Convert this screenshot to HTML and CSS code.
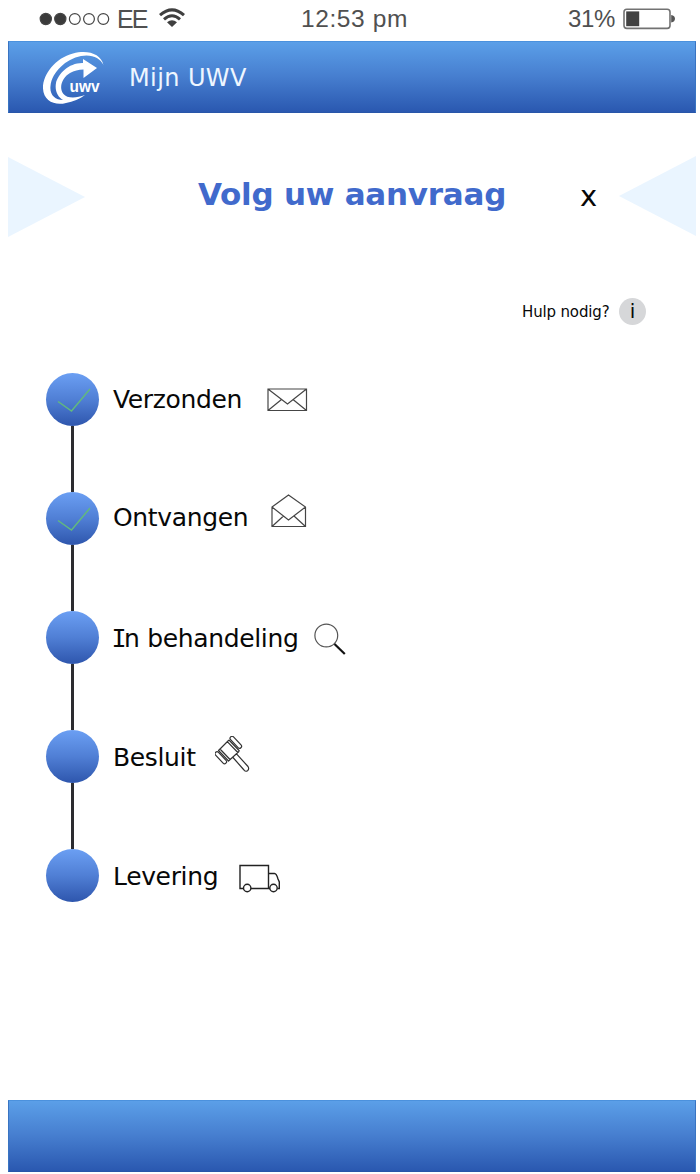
FILE: index.html
```html
<!DOCTYPE html>
<html lang="nl">
<head>
<meta charset="utf-8">
<title>Mijn UWV</title>
<link rel="stylesheet" href="styles.css">
</head>
<body>
<div class="screen">
  <div class="status">
    <svg class="signal" width="72" height="16" viewBox="0 0 72 16"><g stroke="#454545" stroke-width="1.2"><circle cx="6.8" cy="8" r="5.6" fill="#3b3b3b"/><circle cx="21.3" cy="8" r="5.6" fill="#3b3b3b"/><g fill="none"><circle cx="35.8" cy="8" r="5.4"/><circle cx="50" cy="8" r="5.4"/><circle cx="64.3" cy="8" r="5.4"/></g></g></svg>
    <span class="carrier">EE</span>
    <svg class="wifi" width="28" height="20" viewBox="0 0 28 20"><g fill="none" stroke="#3f3f3f" stroke-width="3"><path d="M2 7.2Q14-3.4 26 7.2"/><path d="M6 11.3Q14 4.2 22 11.3"/></g><path d="M9 14.3Q14 10.3 19 14.3L14 19z" fill="#3f3f3f"/></svg>
    <span class="clock">12:53 pm</span>
    <span class="percent">31%</span>
    <svg class="battery" width="53" height="22" viewBox="0 0 53 22"><rect x="1" y="1.2" width="46" height="19.2" rx="2.8" fill="#fff" stroke="#727272" stroke-width="1.6"/><rect x="3.2" y="3.4" width="13" height="14.8" fill="#424242"/><path d="M48.2 7Q52 7.8 52 10.8T48.2 14.6z" fill="#555"/></svg>
  </div>
  <header class="bar">
    <svg class="logo" width="64" height="56" viewBox="0 0 64 56"><path d="M61.5 15C59 4 46-.5 31 3.500C13 8 .5 25 1 38.500C1.500 51 13 56 24 53C31 51.500 38 49 43 45C34 48.500 25 48.500 21.500 44C16 37 21 27 28 23Q34 19.500 41.500 19.500L41.500 28L55 18L41 9V13C27 12.500 16 24 14 33C12.500 41 16 47 21 50C13 50 7.500 45 8.500 36C10 22 24 9 39 6C50 4 58 8 61.500 15Z" fill="#fff"/><text class="logo-text" x="27.500" y="42" textLength="30" lengthAdjust="spacingAndGlyphs">uwv</text></svg>
    <span class="brand">Mijn UWV</span>
  </header>
  <main>
    <div class="title-row">
      <svg width="78" height="82" viewBox="0 0 78 82"><path d="M0 1 77 41 0 81z" fill="#eaf5ff"/></svg>
      <h1 class="title">Volg uw aanvraag</h1>
      <span class="close">x</span>
      <svg class="prev" width="77" height="80" viewBox="0 0 77 80"><path d="M77 0 0 40 77 80z" fill="#eaf5ff"/></svg>
    </div>
    <div class="help"><span class="help-label">Hulp nodig?</span><span class="info">i</span></div>
    <ol class="steps">
      <li class="step">
        <div class="track"><span class="dot"><svg width="53" height="53"><path d="M12 28.500 25.500 38 44 16" fill="none" stroke="#62b97e" stroke-width="1.500"/></svg></span></div>
        <span class="label sent">Verzonden</span>
        <svg class="icon mail" width="41" height="24" viewBox="0 0 41 24"><g fill="none" stroke="#454545" stroke-width="1.200"><path d="M1 1H39.500V22.500H1zM1 1 20.500 16 39.500 1M1 22.500 14.500 11.500M39.500 22.500 26 11.500"/></g></svg>
      </li>
      <li class="step">
        <div class="track"><span class="dot"><svg width="53" height="53"><path d="M12 28.500 25.500 38 44 16" fill="none" stroke="#62b97e" stroke-width="1.500"/></svg></span></div>
        <span class="label received">Ontvangen</span>
        <svg class="icon open" width="36" height="34" viewBox="0 0 36 34"><g fill="none" stroke="#454545" stroke-width="1.200"><path d="M1 13 17.500 1 34.500 13V32.500H1zM1 13 17.500 26 34.500 13M1 32.500 12.500 22M34.500 32.500 23 22"/></g></svg>
      </li>
      <li class="step">
        <div class="track"><span class="dot"></span></div>
        <span class="label progress"><span class="serif-i">I</span>n behandeling</span>
        <svg class="icon search" width="33" height="33" viewBox="0 0 33 33"><circle cx="12.300" cy="12.500" r="11.400" fill="none" stroke="#555" stroke-width="1.200"/><path d="M20.500 21 30.800 31" stroke="#111" stroke-width="2.200"/></svg>
      </li>
      <li class="step">
        <div class="track"><span class="dot"></span></div>
        <span class="label decision">Besluit</span>
        <svg class="icon gavel" width="35" height="37" viewBox="0 0 35 37"><g fill="none" stroke="#333" stroke-width="1.200" stroke-linejoin="round"><rect x="13.300" y="4.300" width="15" height="4" rx="2" transform="rotate(47 20.800 6.300)"/><rect x="-1.700" y="19.700" width="15" height="4" rx="2" transform="rotate(47 5.800 21.700)"/><path d="M14 4 24.500 15M14 4 3.500 14.500 13.500 25 24.500 15M12.300 5.700 22.800 16.500M5 13 15 23.500M21.500 17.800 33 30.500Q34.500 33 32.500 34.800 30.500 36 29 34L18 21.500"/></g></svg>
      </li>
      <li class="step">
        <div class="track"><span class="dot"></span></div>
        <span class="label delivery">Levering</span>
        <svg class="icon truck" width="42" height="29" viewBox="0 0 42 29"><g fill="none" stroke="#222" stroke-width="1.400"><path d="M4.500 24.500H1V1.500H29.500V24.500H12M29.500 24.500H31M29.500 9.500H35.500Q37.500 9.500 39 15L40.300 18V24.500H38.500"/><circle cx="8.200" cy="24" r="3.700"/><circle cx="34.500" cy="24" r="3.700"/></g></svg>
      </li>
    </ol>
  </main>
  <footer class="bar foot"></footer>
</div>
</body>
</html>
```
FILE: styles.css
```css
* { box-sizing: border-box; }
body { margin: 0; background: #fff; font-family: "DejaVu Sans", Verdana, sans-serif; color: #080808; }
svg { display: block; flex: none; }
.screen { width: 700px; height: 1174px; padding: 0 4px 2px 8px; display: flex; flex-direction: column; overflow: hidden; }
.status { height: 41px; flex: none; display: flex; align-items: flex-start; font-family: "Liberation Sans", Arial, sans-serif; font-size: 25px; line-height: 28px; color: #505050; white-space: nowrap; }
.signal { margin: 11px 0 0 31px; }
.carrier { width: 39px; margin: 5px 0 0 6px; letter-spacing: -2px; }
.wifi { margin: 8px 0 0 2px; }
.clock { width: 120px; margin: 5px 0 0 115px; font-size: 24.5px; letter-spacing: 0.6px; }
.percent { width: 50px; margin: 5px 0 0 147px; font-size: 24px; letter-spacing: -0.3px; }
.battery { margin: 8px 0 0 5px; }
.bar { height: 72px; flex: none; display: flex; align-items: flex-start; background: linear-gradient(#5b9fe8, #477fd0 48%, #2a58b0); border: 1px solid #3974c2; border-top-color: #4b91dd; border-bottom-color: #2856a9; }
.logo { margin: 8px 0 0 33px; }
.logo-text { font: bold 17px "Liberation Sans", Arial, sans-serif; fill: #fff; }
.brand { margin: 20px 0 0 23px; font-size: 24px; line-height: 32px; letter-spacing: 0.4px; color: #eef6ff; }
main { flex: 1; }
.title-row { height: 81px; margin-top: 43px; display: flex; align-items: flex-start; }
.title { margin: 18px 0 0 112px; width: 320px; font-size: 31px; line-height: 40px; font-weight: bold; letter-spacing: -0.25px; color: #416acc; white-space: nowrap; }
.close { width: 24px; margin: 24px 0 0 62px; font-size: 29px; line-height: 32px; }
.prev { margin-left: auto; }
.help { height: 28px; margin: 60px 50px 0 0; display: flex; justify-content: flex-end; align-items: center; }
.help-label { width: 97px; padding-top: 1px; font-size: 15px; letter-spacing: -0.15px; white-space: nowrap; }
.info { width: 27px; height: 27px; border-radius: 50%; background: #d6d7d9; font-size: 20px; line-height: 27px; text-align: center; }
.steps { list-style: none; margin: 47.5px 0 0 37.5px; padding: 0; }
.step { height: 119px; display: flex; align-items: flex-start; }
.track { width: 53px; height: 119px; flex: none; display: flex; flex-direction: column; align-items: center; }
.dot { width: 53px; height: 53px; flex: none; border-radius: 50%; background: linear-gradient(#6b9ff3, #507fd5 50%, #2e56ad); }
.step:not(:last-child) .track::after { content: ""; width: 3px; flex: 1; background: #2c2c30; }
.label { flex: none; margin: 11.5px 0 0 14.5px; font-size: 25px; line-height: 32px; letter-spacing: -0.35px; white-space: nowrap; }
.serif-i { font-family: "DejaVu Sans Mono", monospace; letter-spacing: -2.5px; margin-left: -1.5px; }
.sent { width: 154px; }
.received { width: 158px; margin-top: 10.5px; }
.progress { width: 201px; margin-top: 12.5px; }
.decision { width: 102px; margin-top: 12.5px; }
.delivery { width: 126px; margin-top: 12.5px; }
.mail { margin-top: 15.5px; }
.open { margin-top: 2.5px; }
.search { margin-top: 12.5px; }
.gavel { margin-top: 6.5px; }
.truck { margin-top: 15px; }
```
